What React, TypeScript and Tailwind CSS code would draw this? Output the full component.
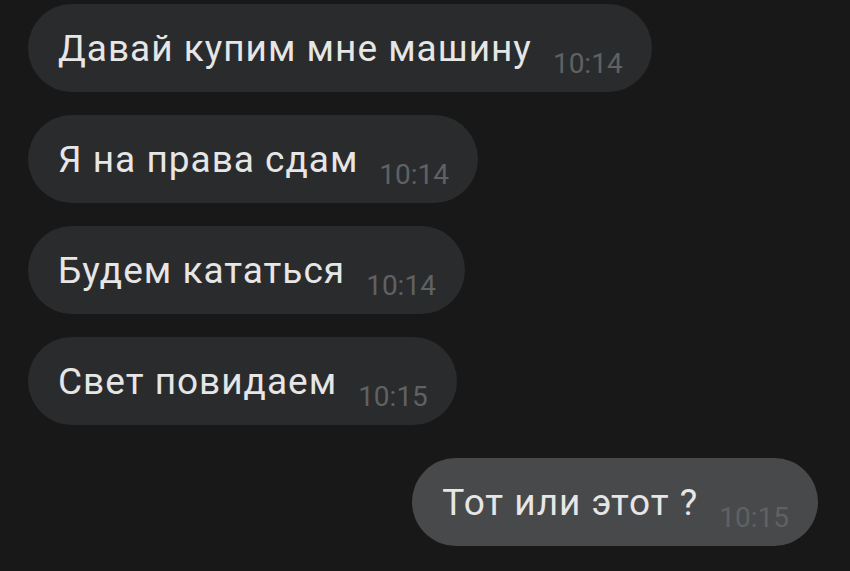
import React from "react";

type Msg = { text: string; time: string; mine?: boolean };

const messages: Msg[] = [
  { text: "Давай купим мне машину", time: "10:14" },
  { text: "Я на права сдам", time: "10:14" },
  { text: "Будем кататься", time: "10:14" },
  { text: "Свет повидаем", time: "10:15" },
  { text: "Тот или этот ?", time: "10:15", mine: true },
];

function Bubble({ text, time, mine }: Msg) {
  return (
    <div
      className={`flex h-[88px] items-center rounded-full pl-[30px] pr-[29px] pt-[2px] ${
        mine ? "bg-[#48494b]" : "bg-[#2a2b2d]"
      }`}
    >
      <div className="flex items-baseline gap-[21px]">
        <span className="text-[37px] leading-[44px] tracking-[1px] text-[#e6e6e6]">{text}</span>
        <span className="translate-y-[12px] text-[28px] leading-[32px] text-[#606163]">
          {time}
        </span>
      </div>
    </div>
  );
}

export default function App() {
  return (
    <div
      className="flex h-[571px] w-[850px] flex-col gap-[23px] overflow-hidden bg-[#181818] pl-[28px] pr-[32px] pt-[4px]"
      style={{ fontFamily: "Roboto, 'Liberation Sans', sans-serif" }}
    >
      {messages.map((m, i) => (
        <div key={i} className={`flex ${m.mine ? "justify-end pt-[10px]" : "justify-start"}`}>
          <Bubble {...m} />
        </div>
      ))}
    </div>
  );
}
